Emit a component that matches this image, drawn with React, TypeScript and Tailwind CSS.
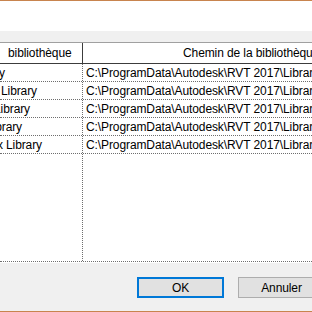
import React from "react";

const font = { fontFamily: '"Liberation Sans", Arial, sans-serif' };

const rows = [
  { name: "Imperial Library", pr: "pr-[77px]" },
  { name: "Imperial Detail Library", pr: "pr-[45px]" },
  { name: "Metric Detail Library", pr: "pr-[52px]" },
  { name: "Metric Library", pr: "pr-[60px]" },
  { name: "Metric Complex Library", pr: "pr-[40px]" },
];

const path = "C:\\ProgramData\\Autodesk\\RVT 2017\\Libraries\\French";

export default function App() {
  return (
    <div
      className="w-[312px] h-[312px] overflow-hidden bg-[#f0f0f0] flex flex-col text-[12px] text-black tracking-[-0.1px]"
      style={font}
    >
      <div className="h-px bg-[#c8844e] shrink-0" />
      <div className="h-[30px] bg-white shrink-0" />
      <div className="h-[11px] shrink-0" />
      {/* list view */}
      <div className="flex flex-col bg-white border-t border-[#a0a0a0] shrink-0">
        <div className="flex h-[21px] border-b border-[#3c3c3c]">
          <div className="w-[83px] shrink-0 border-r border-[#3c3c3c] flex items-center pl-[8px] overflow-hidden whitespace-nowrap">
            bibliothèque
          </div>
          <div className="flex-1 flex items-center pl-[100px] whitespace-nowrap overflow-hidden">
            Chemin de la bibliothèque
          </div>
        </div>
        <div className="flex flex-col h-[198px] border-b border-dotted border-[#6e6e6e]">
          {rows.map((r) => (
            <div key={r.name} className="flex h-[18px] border-b border-dotted border-[#6e6e6e] shrink-0">
              <div
                className={`w-[83px] shrink-0 border-r border-dotted border-[#6e6e6e] flex justify-end items-center overflow-hidden whitespace-nowrap ${r.pr}`}
              >
                {r.name}
              </div>
              <div className="flex-1 flex items-center pl-[3px] whitespace-nowrap overflow-hidden">
                {path}
              </div>
            </div>
          ))}
          <div className="flex flex-1">
            <div className="w-[83px] shrink-0 border-r border-dotted border-[#6e6e6e]" />
            <div className="flex-1" />
          </div>
        </div>
        <div className="h-px bg-white" />
      </div>
      <div className="flex-1 flex items-start pt-[14px] pl-[137px] gap-[14px]">
        <button className="w-[87px] h-[21px] shrink-0 bg-[#e1e1e1] border-2 border-[#0078d7] flex items-center justify-center text-[12px]">
          OK
        </button>
        <button className="w-[87px] h-[21px] shrink-0 bg-[#e1e1e1] border border-[#adadad] flex items-center justify-center text-[12px]">
          Annuler
        </button>
      </div>
      <div className="h-px bg-[#c8844e] shrink-0" />
    </div>
  );
}
